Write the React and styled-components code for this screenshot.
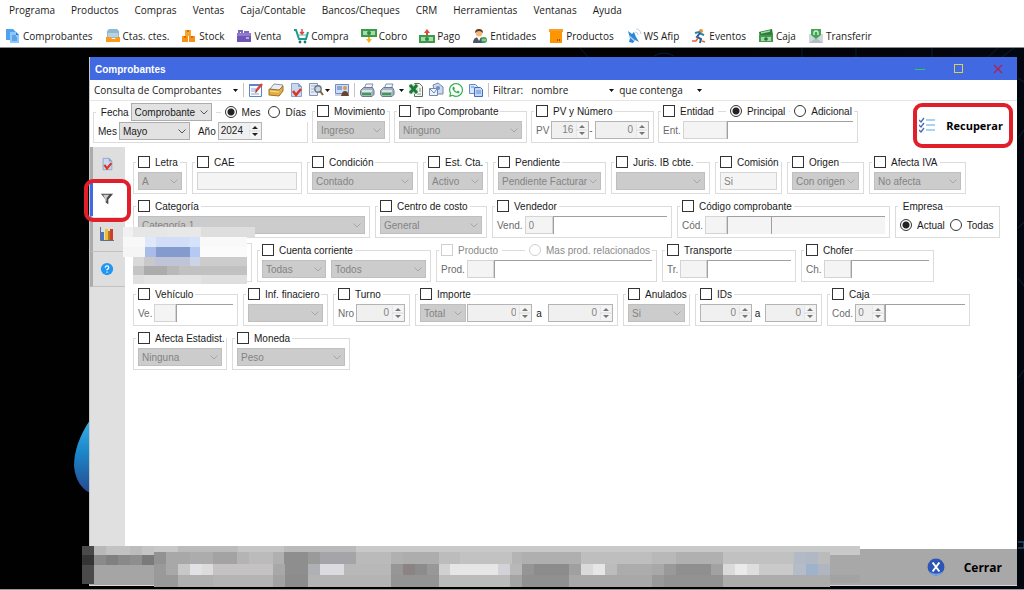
import React from "react";
import styled, { createGlobalStyle } from "styled-components";
import { FaWhatsapp } from "react-icons/fa";

const GlobalStyle = createGlobalStyle`
  * {
    box-sizing: border-box;
  }

  body {
    margin: 0;
    background: #000;
    font-family: "Open Sans", "Noto Sans", sans-serif;
    font-size: 10px;
    color: #1a1a1a;
  }

  button, input, select {
    font: inherit;
    color: inherit;
    margin: 0;
  }
`;

const formFont = `"Liberation Sans", Arial, sans-serif`;

const Page = styled.div`
  min-height: 100vh;
  display: flex;
  flex-direction: column;
  border-bottom: 1px solid #9a9a9a;
`;

const Header = styled.header`
  background: #fff;
  border-bottom: 1px solid #8f8f8f;
`;

const MenuBar = styled.nav`
  display: flex;
  gap: 16px;
  height: 22px;
  align-items: center;
  padding: 0 9px 2px;
`;

const MenuLink = styled.a`
  color: inherit;
  text-decoration: none;
`;

const QuickBar = styled.div`
  display: flex;
  gap: 12px;
  height: 25px;
  align-items: center;
  padding: 2px 5px 0;
`;

const QuickButton = styled.button`
  display: flex;
  align-items: center;
  gap: 2px;
  padding: 0;
  border: 0;
  background: none;
  white-space: nowrap;
`;

const Desktop = styled.main`
  position: relative;
  flex: 1;
  display: flex;
  padding: 9px 7px 3px 89px;
  background: linear-gradient(90deg, #010101 0 60%, #02060f);
`;

const Wallpaper = styled.svg`
  position: absolute;
  top: 0;
  ${(p) => (p.$right ? "right: 0;" : "left: 0;")}
`;

const Window = styled.section`
  position: relative;
  flex: 1;
  min-width: 0;
  display: flex;
  flex-direction: column;
  background: #fff;
  border-left: 1px solid #c8c8c8;
`;

const TitleBar = styled.div`
  display: flex;
  align-items: center;
  height: 23px;
  padding: 1px 13px 0 5px;
  background: #4169e1;
  color: #fff;
`;

const Title = styled.h1`
  flex: 1;
  margin: 0;
  font: bold 10px ${formFont};
`;

const WindowButtons = styled.div`
  display: flex;
  gap: 27px;
`;

const IconButton = styled.button`
  display: flex;
  align-items: center;
  gap: 1px;
  padding: 0;
  border: 0;
  background: none;
`;

const Toolbar = styled.div`
  display: flex;
  align-items: center;
  height: 21px;
  padding-left: 4px;
  border-bottom: 1px solid #e6e6e6;
`;

const Icons = styled.div`
  display: flex;
  align-items: center;
  gap: 4px;
  padding: 0 4px;
`;

const Separator = styled.span`
  width: 1px;
  height: 14px;
  background: #c4c4c4;
`;

const FlatSelect = styled.span`
  position: relative;
  display: flex;
  align-items: center;
  width: ${(p) => p.$w}px;

  select {
    width: 100%;
    height: 17px;
    padding: 0;
    border: 0;
    background: #fff;
    appearance: none;
  }

  svg {
    position: absolute;
    right: 5px;
    pointer-events: none;
  }
`;

const FilterLabel = styled.label`
  padding: 0 8px 0 4px;
`;

const TopRow = styled.div`
  display: flex;
  align-items: flex-end;
  gap: 4px;
  padding: 1px 4px 4px 3px;
  font: 10px ${formFont};
`;

const Body = styled.div`
  flex: 1;
  display: flex;
`;

const Rail = styled.div`
  width: 35px;
  background: #e0e0e0;
`;

const Tab = styled.button`
  position: relative;
  display: flex;
  align-items: center;
  justify-content: center;
  width: 100%;
  height: 35px;
  padding: 0 5px 0 0;
  border: 0;
  border-left: 3px solid ${(p) => (p.$active ? "#4169e1" : "#ababab")};
  border-bottom: 1px solid ${(p) => (p.$active ? "#fff" : "#c2c2c2")};
  background: ${(p) => (p.$active ? "#fff" : "#dedede")};
`;

const Mark = styled.span`
  position: absolute;
  z-index: 2;
  inset: ${(p) => p.$inset};
  border: 4px solid #e01f2b;
  border-radius: 9px;
  pointer-events: none;
`;

const Filters = styled.div`
  position: relative;
  flex: 1;
  display: flex;
  flex-direction: column;
  gap: 5px;
  padding: 8px 8px 20px;
  font: 10px ${formFont};
`;

const Row = styled.div`
  display: flex;
  gap: 5px;
`;

const GroupBox = styled.fieldset`
  flex: none;
  width: ${(p) => p.$w}px;
  min-width: 0;
  height: ${(p) => (p.$tall ? 41 : 39)}px;
  margin: 0;
  padding: ${(p) => (p.$tall ? 0 : 3)}px 4px 3px;
  border: 1px solid #dcdcdc;
`;

const Legend = styled.legend`
  display: flex;
  align-items: center;
  height: ${(p) => (p.$tall ? 20 : 14)}px;
  margin-left: -2px;
  padding: 0 2px;
  white-space: nowrap;
`;

const Rule = styled.span`
  width: ${(p) => p.$w}px;
  height: 1px;
  margin: 0 4px;
  background: #dcdcdc;
`;

const Fields = styled.div`
  display: flex;
  align-items: center;
  gap: ${(p) => p.$gap || 0}px;
  height: 18px;
`;

const Caption = styled.label`
  flex: none;
  padding-right: 2px;
  color: ${(p) => (p.$dark ? "#1a1a1a" : "#6b6b6b")};
`;

const Choice = styled.label`
  display: flex;
  align-items: center;
  gap: 5px;
  color: ${(p) => (p.$off ? "#8a8a8a" : "inherit")};

  input {
    flex: none;
    width: 12px;
    height: 12px;
    border: 1px solid ${(p) => (p.$off ? "#cfcfcf" : "#333")};
    background: #fff;
    appearance: none;
  }

  input[type="radio"] {
    border-radius: 50%;
  }

  input[type="radio"]:checked {
    background: radial-gradient(#222 0 3px, #fff 4px);
  }
`;

const SelectBox = styled.span`
  position: relative;
  flex: ${(p) => (p.$w ? "none" : 1)};
  width: ${(p) => (p.$w ? p.$w + "px" : "auto")};
  min-width: 0;
  display: flex;
  align-items: center;

  select {
    width: 100%;
    height: 18px;
    padding: 0 0 0 3px;
    border: 1px solid ${(p) => (p.$on ? "#adadad" : "#bfbfbf")};
    border-radius: 0;
    background: ${(p) => (p.$on ? "#e2e2e2" : "#cccccc")};
    color: ${(p) => (p.$on ? "#1a1a1a" : "#838383")};
    opacity: 1;
    appearance: none;
  }

  svg {
    position: absolute;
    right: 4px;
    pointer-events: none;
  }
`;

const SpinBox = styled.span`
  position: relative;
  flex: ${(p) => (p.$w ? "none" : 1)};
  width: ${(p) => (p.$w ? p.$w + "px" : "auto")};
  min-width: 0;
  display: flex;
  align-items: center;

  input {
    width: 100%;
    height: 18px;
    padding: 0 ${(p) => (p.$left ? 0 : 15)}px 2px ${(p) => (p.$left ? 2 : 0)}px;
    border: 1px solid #b4b4b4;
    background: #f0f0f0;
    color: ${(p) => (p.$on ? "#1a1a1a" : "#838383")};
    text-align: ${(p) => (p.$left ? "left" : "right")};
    appearance: textfield;
  }

  input::-webkit-inner-spin-button {
    display: none;
  }

  svg {
    position: absolute;
    right: 2px;
    pointer-events: none;
  }
`;

const TextField = styled.input`
  flex: ${(p) => (p.$w ? "none" : 1)};
  width: ${(p) => (p.$w ? p.$w + "px" : "auto")};
  min-width: 0;
  height: 18px;
  padding: 0 3px;
  border: 1px solid #d4d4d4;
  background: #f4f4f4;
  color: #838383;
`;

const LineField = styled(TextField)`
  border: 0;
  border-top: 1px solid #a0a0a0;
  border-left: 1px solid #a0a0a0;
  background: ${(p) => (p.$filled ? "#f4f4f4" : "#fff")};
`;

const Recover = styled.button`
  position: relative;
  display: flex;
  align-items: center;
  gap: 11px;
  height: 36px;
  margin-left: auto;
  padding: 0 10px 0 6px;
  border: 0;
  background: none;
  font: bold 11px "Open Sans", sans-serif;
  color: #000;
`;

const Footer = styled.footer`
  position: relative;
  display: flex;
  align-items: center;
  justify-content: flex-end;
  height: 37px;
  padding-right: 15px;
  background: #a8a8a8;
  border-bottom: 1px solid #d8d8d8;
`;

const CloseButton = styled(IconButton)`
  gap: 19px;
  font: bold 12px "Open Sans", sans-serif;
  color: #000;
`;

const Mosaic = styled.svg`
  position: absolute;
  z-index: 1;
  left: ${(p) => p.$x}px;
  top: ${(p) => p.$y}px;
`;

const Svg = ({ size = 16, children }) => (
  <svg width={size} height={size} viewBox="0 0 16 16" fill="none" aria-hidden="true">
    {children}
  </svg>
);

const quickIcons = {
  docs: (
    <>
      <path d="M1 1h7l3 3v8H1z" fill="#4fa3ee" />
      <path d="M5 4h6l3 3v8H5z" fill="#8cc8fa" />
      <path d="M11 4l3 3h-3z" fill="#2c7fd6" />
      <path d="M7 8h4M7 10h5M7 12h5" stroke="#2c7fd6" />
    </>
  ),
  tray: (
    <>
      <path d="M4 1h8l2 2v7H2V3z" fill="#8fb9d3" />
      <path d="M3 5h10v4H3z" fill="#b7d3e2" />
      <path d="M1 9h5l1 2h3l1-2h4v5H1z" fill="#fb9a1c" />
    </>
  ),
  stock: (
    <>
      <path d="M4 2h6v6H4z" fill="#f8a52b" />
      <path d="M1 8h6v6H1zM8 8h6v6H8z" fill="#f7931a" />
      <path d="M6 2h2v2H6zM3 8h2v2H3zM10 8h2v2h-2z" fill="#d56f05" />
    </>
  ),
  bag: (
    <>
      <path d="M1 5h14v9H1z" fill="#6f55b5" />
      <path d="M1 5h14v3H1z" fill="#9079cf" />
      <path d="M3 5V3h3v2M9 5V4h3v1" stroke="#7d68bd" strokeWidth="2" />
      <path d="M10 9h3v2h-3z" fill="#b9a8e6" />
    </>
  ),
  cart: (
    <>
      <path d="M1 2h2l3 9h7l2-7" stroke="#1d9a8a" strokeWidth="2" />
      <path d="M5 7h9" stroke="#3bb8a5" />
      <path d="M9 1v4M7 4l2 2 2-2" stroke="#e23f3f" strokeWidth="1.4" />
      <circle cx="7" cy="14" r="1.4" fill="#147a6e" />
      <circle cx="12" cy="14" r="1.4" fill="#147a6e" />
    </>
  ),
  cashIn: (
    <>
      <path d="M0 1h16v8H0z" fill="#3a9c4b" />
      <path d="M2 3h12v4H2z" fill="#a5dba8" />
      <circle cx="8" cy="5" r="2" fill="#2f8a41" />
      <path d="M8 9v3" stroke="#f3b51b" strokeWidth="2" />
      <path d="M5 11h6l-3 4z" fill="#f3b51b" />
    </>
  ),
  cashOut: (
    <>
      <path d="M0 7h16v8H0z" fill="#3a9c4b" />
      <path d="M2 9h12v4H2z" fill="#a5dba8" />
      <circle cx="8" cy="11" r="2" fill="#2f8a41" />
      <path d="M8 7V4" stroke="#e5463b" strokeWidth="2" />
      <path d="M5 5h6L8 1z" fill="#e5463b" />
    </>
  ),
  person: (
    <>
      <circle cx="7" cy="5" r="3.4" fill="#f2b879" />
      <path d="M3 5q0-4 4-4t4 4q-2-2-4-2T3 5z" fill="#5b3a1e" />
      <path d="M1 15q0-6 6-6t6 6z" fill="#4b5563" />
      <path d="M5 9l2 4 2-4z" fill="#fff" />
      <circle cx="12" cy="12" r="3" fill="#46a356" />
      <path d="M10 12h4" stroke="#d5f0d4" />
    </>
  ),
  box: (
    <>
      <path d="M1 1h14v3H1z" fill="#f7a029" />
      <path d="M2 3h12v12H2z" fill="#fd9503" />
      <path d="M9 11h1v2H9zM11 11h1v2h-1z" fill="#9a5300" />
    </>
  ),
  dish: (
    <>
      <path d="M2 3l4 3 2-2 2 5 3 5-4-2-2 3-4-1 1-4z" fill="#2f86d6" />
      <path d="M3 8l6 5" stroke="#a8d4f5" strokeWidth="1.6" />
      <path d="M9 4q3 0 3 3M10 1q4 0 5 5" stroke="#b5d3ee" />
    </>
  ),
  runner: (
    <>
      <circle cx="10" cy="3" r="2" fill="#ef8f32" />
      <path d="M4 5l4-1 2 2 3 1" stroke="#2583a5" strokeWidth="2" />
      <path d="M9 5l-3 4 4 2-1 4" stroke="#2a5c9a" strokeWidth="2" />
      <path d="M7 10l-2 3H1M11 13l3 1" stroke="#e06a35" strokeWidth="1.6" />
    </>
  ),
  bills: (
    <>
      <path d="M1 4l13-3 1 6-13 4z" fill="#2e7d3b" />
      <path d="M1 7h14v7H1z" fill="#3f9a4e" />
      <path d="M3 9h10v4H3z" fill="#a3d9a2" />
      <circle cx="8" cy="11" r="1.8" fill="#256a32" />
      <path d="M3 5l9-2" stroke="#a3d9a2" strokeWidth="1.4" />
    </>
  ),
  transfer: (
    <>
      <path d="M1 6h14v9H1z" fill="#cfd8dc" />
      <path d="M1 15l7-5 7 5z" fill="#b0bec5" />
      <path d="M3 1h10v6l-5 4-5-4z" fill="#43a452" />
      <path d="M6 7V5q0-2 2-2t2 2v2" stroke="#d5efd5" strokeWidth="1.4" />
    </>
  ),
};

const quick = [
  ["docs", "Comprobantes"],
  ["tray", "Ctas. ctes."],
  ["stock", "Stock"],
  ["bag", "Venta"],
  ["cart", "Compra"],
  ["cashIn", "Cobro"],
  ["cashOut", "Pago"],
  ["person", "Entidades"],
  ["box", "Productos"],
  ["dish", "WS Afip"],
  ["runner", "Eventos"],
  ["bills", "Caja"],
  ["transfer", "Transferir"],
];

const menus = [
  "Programa",
  "Productos",
  "Compras",
  "Ventas",
  "Caja/Contable",
  "Bancos/Cheques",
  "CRM",
  "Herramientas",
  "Ventanas",
  "Ayuda",
];

const Note = () => (
  <Svg>
    <path d="M1.500 2.500h12v12h-12z" fill="#f7faff" stroke="#5c85c7" />
    <path d="M1 2h13v2H1z" fill="#5c85c7" />
    <path d="M3 7h5M3 9h4M3 12h8" stroke="#8fa9d4" />
    <path d="M14 2l-6 7" stroke="#e0432f" strokeWidth="2.500" />
    <path d="M8 8l-1 3 2-1z" fill="#5b2b1c" />
  </Svg>
);

const Folder = () => (
  <Svg>
    <path d="M2 7l4-5 9 1-3 6z" fill="#e9eef5" stroke="#8a94a5" />
    <path d="M1 7l10 1 4-4v5l-4 5-10-1z" fill="#e3ad43" stroke="#9a7427" />
    <path d="M2 9l9 1" stroke="#fbe09a" />
  </Svg>
);

const DocCheck = ({ size }) => (
  <Svg size={size}>
    <path d="M3.500 1.500h7l3 3v10h-10z" fill="#c9d8ef" stroke="#8ba3cc" />
    <path d="M10 1l4 4h-4z" fill="#89a4d0" />
    <path d="M5 9l3 4 5-6" stroke="#dd3527" strokeWidth="2.600" />
  </Svg>
);

const Find = () => (
  <Svg>
    <path d="M1.500 1.500h8v12h-8z" fill="#e5ebf5" stroke="#8496b5" />
    <path d="M3 4h5M3 7h3M3 10h3" stroke="#a5b3cb" />
    <circle cx="10" cy="7" r="3.200" fill="#c6d6e6" stroke="#6d7884" strokeWidth="1.400" />
    <path d="M12 9l3 4" stroke="#83603c" strokeWidth="2" />
  </Svg>
);

const Card = () => (
  <Svg>
    <path d="M1.500 2.500h13v9h-13z" fill="#cfdcf5" stroke="#6f8cc6" />
    <path d="M3 5h5M3 7h5" stroke="#4c6dae" />
    <circle cx="11" cy="6" r="2" fill="#d7975a" />
    <path d="M7 14q1-5 4-5t4 5z" fill="#66452f" />
    <path d="M1 13h6" stroke="#94a7cc" />
  </Svg>
);

const Printer = () => (
  <Svg>
    <path d="M5 7l2-5h7l-2 5z" fill="#f3f7fd" stroke="#7f92b0" />
    <path d="M1.500 8.500l3-3h9l1.500 3v4l-2 2h-10l-1.500-2z" fill="#a5b2c2" stroke="#6b7a90" />
    <path d="M3 9h10" stroke="#eef3f8" strokeWidth="1.500" />
    <path d="M3 12h9" stroke="#32a447" strokeWidth="2" />
  </Svg>
);

const Excel = () => (
  <Svg>
    <path d="M6.500 1.500h5l3 3v10h-8z" fill="#f3f6f2" stroke="#59705b" />
    <path d="M11 7h2M11 9h2M9 12h4" stroke="#81987f" />
    <path d="M1 2h9v10H1z" fill="#cde6d0" />
    <path d="M2 3l7 8M9 3l-7 8" stroke="#1c7a38" strokeWidth="3" />
  </Svg>
);

const Mail = () => (
  <Svg>
    <path d="M5 3l5-2 5 4v7H7z" fill="#ccd9ee" stroke="#7588ab" />
    <path d="M1.500 6.500h8v7h-8z" fill="#edf2fa" stroke="#7588ab" />
    <path d="M2 7l4 4 3-4" stroke="#7588ab" />
    <circle cx="10" cy="6" r="2" fill="#6c8fc5" />
  </Svg>
);

const Copy = () => (
  <Svg>
    <path d="M1.500 2.500h6l2 2v7h-8z" fill="#dce8fa" stroke="#5e8ad0" />
    <path d="M6.500 5.500h6l2 2v7h-8z" fill="#c3d8f7" stroke="#3d6fc0" />
    <path d="M8 9h5M8 11h5M3 5h3" stroke="#5e8ad0" />
  </Svg>
);

const Funnel = () => (
  <Svg size={14}>
    <path d="M1 2h14L9.500 8.500V14l-3-2V8.500z" fill="#4a4a4a" />
    <path d="M3.500 3h7L7.500 7v4" fill="#cdcdcd" />
  </Svg>
);

const Chart = () => (
  <Svg>
    <path d="M1.500 1v13.500H15" stroke="#5f7088" />
    <path d="M2 6h3v8H2z" fill="#4b74c4" />
    <path d="M6 3h3v11H6z" fill="#f3be35" />
    <path d="M9 5h2v9H9z" fill="#b57b1c" />
    <path d="M11 3h3v11h-3z" fill="#cd3c2d" />
  </Svg>
);

const Help = () => (
  <Svg size={14}>
    <circle cx="8" cy="8" r="7" fill="#2196f3" />
    <path d="M6 6.500q0-2 2-2t2 2q0 1-2 2.200v.8M8 10.800v1.500" stroke="#fff" strokeWidth="1.400" />
  </Svg>
);

const Checklist = () => (
  <Svg>
    <path d="M0 3l2 2 3-4M0 8l2 2 3-4M0 13l2 2 3-4" stroke="#4a68b8" strokeWidth="1.300" />
    <path d="M7 3h9M7 8h9M7 13h9" stroke="#8cc6ea" strokeWidth="1.500" />
  </Svg>
);

const CloseIcon = () => (
  <Svg size={18}>
    <circle cx="8" cy="8" r="7.500" fill="#2d55b5" />
    <path d="M2 12q6 4 12 0-2 3.500-6 3.500T2 12z" fill="#6fa5ef" />
    <path d="M5 4l6 8M11 4l-6 8" stroke="#fff" strokeWidth="1.800" />
  </Svg>
);

const Caret = () => (
  <svg width="5" height="3" viewBox="0 0 5 3" aria-hidden="true">
    <path d="M0 0h5L2.500 3z" fill="#111" />
  </svg>
);

const Chevron = ({ on }) => (
  <svg width="8" height="5" viewBox="0 0 8 5" fill="none" aria-hidden="true">
    <path d="M.5.500L4 4 7.500.500" stroke={on ? "#555" : "#a6a6a6"} />
  </svg>
);

const Arrows = ({ on }) => (
  <svg width="11" height="14" viewBox="0 0 11 14" aria-hidden="true">
    <path d="M0 0h11v14H0z" fill="#f4f4f4" />
    <path d="M0 0v14M0 7h11" stroke="#dadada" />
    <path d="M3 5h6L6 2zM3 9h6l-3 3z" fill={on ? "#222" : "#777"} />
  </svg>
);

const Select = ({ label, value = "", w, on, id }) => (
  <SelectBox $w={w} $on={on}>
    <select id={id} aria-label={label} defaultValue={value} disabled={!on}>
      <option>{value}</option>
    </select>
    <Chevron on={on} />
  </SelectBox>
);

const Spin = ({ label, value = 0, w, on, left, id }) => (
  <SpinBox $w={w} $on={on} $left={left}>
    <input id={id} type="number" aria-label={label} defaultValue={value} disabled={!on} />
    <Arrows on={on} />
  </SpinBox>
);

const Check = ({ label, off }) => (
  <Choice $off={off}>
    <input type="checkbox" disabled={off} />
    {label}
  </Choice>
);

const Radio = ({ name, label, checked, off }) => (
  <Choice $off={off}>
    <input type="radio" name={name} defaultChecked={checked} disabled={off} />
    {label}
  </Choice>
);

const Group = ({ label, w, gap, extra, off, children }) => (
  <GroupBox $w={w}>
    <Legend>
      <Check label={label} off={off} />
      {extra}
    </Legend>
    <Fields $gap={gap}>{children}</Fields>
  </GroupBox>
);

// Short code followed by the description it resolves to
const Lookup = ({ id, caption, w, value = "" }) => (
  <>
    <Caption htmlFor={id}>{caption}</Caption>
    <TextField id={id} $w={w} defaultValue={value} disabled />
    <LineField aria-label={`${caption} descripción`} disabled />
  </>
);

// Each strip: y, height, start x, then [end x, colour] pairs
const footerStrips = [
  [0, 38, 0, [[12, "#4a4a4a"]]],
  [9, 10, 0, [[12, "#343434"], [24, "#8a8a8a"], [36, "#808080"], [48, "#898989"], [60, "#8e8e8e"], [72, "#7a7a7a"]]],
  [0, 9, 12, [[24, "#b8b8b8"], [48, "#c2c2c2"], [60, "#bcbcbc"], [72, "#c4c4c4"]]],
  [19, 20, 12, [[72, "#a5a5a5"]]],
  [0, 6, 72, [[96, "#c8c8c8"], [156, "#bbbbbb"], [202, "#c5c5c5"], [274, "#bababa"], [778, "#c9c9c9"]]],
  [6, 3, 748, [[778, "#c9c9c9"]]],
  [6, 12, 72, [[84, "#929292"], [108, "#a8a8a8"], [131, "#acacac"], [155, "#a3a3a3"], [167, "#b4b4b4"], [191, "#bbbbbb"], [202, "#b0b0b0"], [226, "#8e8e8e"], [238, "#9a9a9a"], [274, "#a5a5a9"], [309, "#bababa"], [321, "#b0b0b0"], [357, "#adadad"], [378, "#bcbcbc"], [430, "#c2c2c2"], [440, "#b4b4b4"], [499, "#afafaf"], [570, "#bebebe"], [594, "#b8b8b8"], [641, "#b0b0b0"], [712, "#c1c1c1"], [724, "#b2bac6"], [736, "#b0b8c4"], [748, "#bbbbbb"]]],
  [18, 11, 72, [[84, "#9a9a9a"], [96, "#a8a8a8"], [108, "#c8c8c8"], [120, "#e2e2e6"], [131, "#dcdcdc"], [191, "#c4c2c2"], [203, "#a8a8a8"], [226, "#8e8e8e"], [238, "#aeb0b6"], [262, "#dcdce0"], [309, "#b8b8b8"], [321, "#969696"], [333, "#8a8484"], [345, "#8c8c8c"], [357, "#989898"], [368, "#d0d0d0"], [416, "#e6e6e6"], [428, "#d2d2d8"], [440, "#b8b8b8"], [452, "#959595"], [487, "#8c8c8c"], [499, "#a0a0a0"], [511, "#dadada"], [523, "#e6e6e6"], [535, "#bcbcbc"], [570, "#acacac"], [582, "#a8a8a8"], [594, "#999999"], [629, "#8f8f8f"], [641, "#a2a2a2"], [653, "#dadada"], [665, "#eaeaea"], [677, "#dedede"], [711, "#cacaca"], [724, "#b4bcc8"], [736, "#9fb2cc"], [748, "#b0b6c0"]]],
  [29, 12, 72, [[96, "#999999"], [131, "#b0b0b0"], [191, "#b4b4b4"], [203, "#a2a2a2"], [226, "#8c8c8c"], [309, "#b4b4b4"], [357, "#949494"], [428, "#bbbbbb"], [440, "#a4a4a4"], [487, "#909090"], [570, "#a8a8a8"], [582, "#999999"], [641, "#929292"], [748, "#acacac"]]],
  [29, 8, 748, [[778, "#a3a3a3"]]],
];

const groupStrips = [
  [0, 10, 0, [[10, "#f1f1f1"], [44, "#e6e6e6"], [78, "#e8e8e8"], [132, "#dedede"]]],
  [10, 10, 0, [[22, "#f8f8f8"], [33, "#dfe7fa"], [66, "#d2def8"], [77, "#d6e2fb"], [124, "#f9f9f9"]]],
  [20, 10, 0, [[22, "#f5f5f5"], [33, "#a9bce8"], [67, "#839bcd"], [77, "#b6c9f2"], [124, "#fbfbfb"]]],
  [30, 9, 10, [[21, "#d9d9d9"], [32, "#c9c9cb"], [67, "#bfc5d6"], [77, "#ccd4e8"], [124, "#cccccc"]]],
  [39, 9, 10, [[21, "#c4c4c4"], [44, "#acacac"], [56, "#b8b8b8"], [124, "#c1c1c1"]]],
  [48, 9, 10, [[21, "#dfdfdf"], [78, "#e3e3e3"], [124, "#dedede"]]],
];

const Strips = ({ data }) =>
  data.map(([y, h, start, cells], row) =>
    cells.map(([end, fill], i) => {
      const x = i ? cells[i - 1][0] : start;
      return <rect key={`${row}-${i}`} x={x} y={y} width={end - x} height={h} fill={fill} />;
    })
  );

function AppHeader() {
  return (
    <Header>
      <MenuBar>
        {menus.map((m) => (
          <MenuLink href="#" key={m}>
            {m}
          </MenuLink>
        ))}
      </MenuBar>
      <QuickBar>
        {quick.map(([icon, label]) => (
          <QuickButton key={label}>
            <Svg>{quickIcons[icon]}</Svg>
            {label}
          </QuickButton>
        ))}
      </QuickBar>
    </Header>
  );
}

function WindowTitle() {
  return (
    <TitleBar>
      <Title>Comprobantes</Title>
      <WindowButtons>
        <IconButton aria-label="Minimizar">
          <svg width="12" height="10" viewBox="0 0 12 10" shapeRendering="crispEdges">
            <path d="M1 5h10v1H1z" fill="#22d060" />
          </svg>
        </IconButton>
        <IconButton aria-label="Maximizar">
          <svg width="12" height="10" viewBox="0 0 12 10" shapeRendering="crispEdges">
            <path d="M1 0h9v9H1zM2 1v7h7V1z" fill="#d9cf5a" fillRule="evenodd" />
          </svg>
        </IconButton>
        <IconButton aria-label="Cerrar ventana">
          <svg width="12" height="10" viewBox="0 0 12 10">
            <path d="M2 1l8 8M10 1L2 9" stroke="#b5204a" strokeWidth="1.300" />
          </svg>
        </IconButton>
      </WindowButtons>
    </TitleBar>
  );
}

function WindowToolbar() {
  return (
    <Toolbar>
      <FlatSelect $w={149}>
        <select aria-label="Consulta" defaultValue="Consulta de Comprobantes">
          <option>Consulta de Comprobantes</option>
        </select>
        <Caret />
      </FlatSelect>
      <Separator />
      <Icons>
        <IconButton aria-label="Editar"><Note /></IconButton>
        <IconButton aria-label="Abrir"><Folder /></IconButton>
        <IconButton aria-label="Validar"><DocCheck /></IconButton>
        <IconButton aria-label="Buscar"><Find /><Caret /></IconButton>
        <IconButton aria-label="Ficha"><Card /></IconButton>
      </Icons>
      <Separator />
      <Icons>
        <IconButton aria-label="Imprimir"><Printer /></IconButton>
        <IconButton aria-label="Imprimir como"><Printer /></IconButton>
        <IconButton aria-label="Opciones"><Caret /></IconButton>
        <IconButton aria-label="Excel"><Excel /></IconButton>
        <IconButton aria-label="Correo"><Mail /></IconButton>
        <IconButton aria-label="WhatsApp"><FaWhatsapp size={16} color="#2bb24a" /></IconButton>
        <IconButton aria-label="Copiar"><Copy /></IconButton>
      </Icons>
      <Separator />
      <FilterLabel htmlFor="filtrar">Filtrar:</FilterLabel>
      <FlatSelect $w={88}>
        <select id="filtrar" defaultValue="nombre">
          <option>nombre</option>
        </select>
        <Caret />
      </FlatSelect>
      <FlatSelect $w={88}>
        <select aria-label="Condición del filtro" defaultValue="que contenga">
          <option>que contenga</option>
        </select>
        <Caret />
      </FlatSelect>
    </Toolbar>
  );
}

function TopFilters() {
  return (
    <TopRow>
      <GroupBox $w={215} $tall>
        <Legend $tall>
          <Caption $dark htmlFor="fecha">&nbsp;Fecha</Caption>
          <Select id="fecha" value="Comprobante" w={81} on />
          <Rule $w={5} />
          <Radio name="periodo" label="Mes" checked />
          <Rule $w={0} />
          <Radio name="periodo" label="Días" />
        </Legend>
        <Fields>
          <Caption $dark htmlFor="mes">Mes</Caption>
          <Select id="mes" value="Mayo" w={71} on />
          <Rule $w={0} />
          <Caption $dark htmlFor="anio">Año</Caption>
          <Spin id="anio" value={2024} w={44} on left />
        </Fields>
      </GroupBox>
      <Group label="Movimiento" w={78}>
        <Select label="Movimiento" value="Ingreso" />
      </Group>
      <Group label="Tipo Comprobante" w={133}>
        <Select label="Tipo Comprobante" value="Ninguno" />
      </Group>
      <Group label="PV y Número" w={123}>
        <Caption htmlFor="pv">PV</Caption>
        <Spin id="pv" value={16} w={38} />
        <Caption htmlFor="numero">-</Caption>
        <Spin id="numero" />
      </Group>
      <Group
        label="Entidad"
        w={200}
        extra={
          <>
            <Rule $w={8} />
            <Radio name="entidad" label="Principal" checked />
            <Rule $w={1} />
            <Radio name="entidad" label="Adicional" />
          </>
        }
      >
        <Lookup id="ent" caption="Ent." w={44} />
      </Group>
      <Recover>
        <Checklist />
        Recuperar
        <Mark $inset="-4px 0 -5px 0" />
      </Recover>
    </TopRow>
  );
}

function FilterPanel() {
  return (
    <Filters>
      <Row>
        <Group label="Letra" w={54}><Select label="Letra" value="A" /></Group>
        <Group label="CAE" w={110}><TextField aria-label="CAE" disabled /></Group>
        <Group label="Condición" w={111}><Select label="Condición" value="Contado" /></Group>
        <Group label="Est. Cta." w={65}><Select label="Estado de cuenta" value="Activo" /></Group>
        <Group label="Pendiente" w={113}><Select label="Pendiente" value="Pendiente Facturar" /></Group>
        <Group label="Juris. IB cbte." w={99}><Select label="Jurisdicción" /></Group>
        <Group label="Comisión" w={67}><TextField aria-label="Comisión" defaultValue="Si" disabled /></Group>
        <Group label="Origen" w={77}><Select label="Origen" value="Con origen" /></Group>
        <Group label="Afecta IVA" w={97}><Select label="Afecta IVA" value="No afecta" /></Group>
      </Row>
      <Row>
        <Group label="Categoría" w={237}><Select label="Categoría" value="Categoría 1" /></Group>
        <Group label="Centro de costo" w={112}><Select label="Centro de costo" value="General" /></Group>
        <Group label="Vendedor" w={180}><Lookup id="vend" caption="Vend." w={28} value="0" /></Group>
        <Group label="Código comprobante" w={213}>
          <Caption htmlFor="cod">Cód.</Caption>
          <TextField id="cod" $w={22} disabled />
          <LineField aria-label="Código" $w={44} $filled disabled />
          <LineField aria-label="Descripción del código" $filled disabled />
        </Group>
        <GroupBox $w={105}>
          <Legend>&nbsp;Empresa</Legend>
          <Fields $gap={5}>
            <Radio name="empresa" label="Actual" checked />
            <Radio name="empresa" label="Todas" />
          </Fields>
        </GroupBox>
      </Row>
      <Row>
        <GroupBox $w={119} aria-hidden="true" />
        <Group label="Cuenta corriente" w={174} gap={5}>
          <Select label="Cuenta corriente" value="Todas" w={64} />
          <Select label="Tipo de cuenta" value="Todos" />
        </Group>
        <Group
          label="Producto"
          w={221}
          off
          extra={
            <>
              <Rule $w={23} />
              <Radio name="relacionados" label="Mas prod. relacionados" off />
            </>
          }
        >
          <Lookup id="prod" caption="Prod." w={27} />
        </Group>
        <Group label="Transporte" w={134}><Lookup id="tr" caption="Tr." w={27} /></Group>
        <Group label="Chofer" w={133}><Lookup id="ch" caption="Ch." w={27} /></Group>
      </Row>
      <Row>
        <Group label="Vehículo" w={105}><Lookup id="ve" caption="Ve." w={22} /></Group>
        <Group label="Inf. finaciero" w={85}><Select label="Inf. finaciero" /></Group>
        <Group label="Turno" w={77}>
          <Caption htmlFor="nro">Nro</Caption>
          <Spin id="nro" />
        </Group>
        <Group label="Importe" w={203} gap={1}>
          <Select label="Importe" value="Total" w={46} />
          <Spin label="Importe desde" />
          <Caption $dark htmlFor="importe-hasta">&nbsp;a&nbsp;</Caption>
          <Spin id="importe-hasta" />
        </Group>
        <Group label="Anulados" w={67}><Select label="Anulados" value="Si" /></Group>
        <Group label="IDs" w={127}>
          <Spin label="ID desde" />
          <Caption $dark htmlFor="id-hasta">&nbsp;a&nbsp;</Caption>
          <Spin id="id-hasta" />
        </Group>
        <Group label="Caja" w={143}>
          <Caption htmlFor="caja">Cod.</Caption>
          <Spin id="caja" w={30} left />
          <LineField aria-label="Caja descripción" disabled />
        </Group>
      </Row>
      <Row>
        <Group label="Afecta Estadist." w={94}><Select label="Afecta Estadist." value="Ninguna" /></Group>
        <Group label="Moneda" w={118}><Select label="Moneda" value="Peso" /></Group>
      </Row>
      <Mosaic $x={-2} $y={80} width="132" height="57" shapeRendering="crispEdges" aria-hidden="true">
        <Strips data={groupStrips} />
      </Mosaic>
    </Filters>
  );
}

function App() {
  return (
    <>
      <GlobalStyle />
      <Page>
        <AppHeader />
        <Desktop>
          <Wallpaper width="90" height="480" aria-hidden="true">
            <defs>
              <linearGradient id="drop" x1="0" y1="0" x2="0" y2="1">
                <stop offset="0" stopColor="#3bb0e6" />
                <stop offset=".45" stopColor="#1a86c8" />
                <stop offset="1" stopColor="#27498f" />
              </linearGradient>
            </defs>
            <path d="M90 372Q74 396 74 418Q76 438 90 445z" fill="url(#drop)" />
          </Wallpaper>
          <Wallpaper $right width="520" height="541" fill="none" stroke="#0e3a5c" aria-hidden="true">
            <path d="M76 0l8 9M298 0v9M352 0v9M428 0v9M484 9l10-9M498 9l12-9M150 8q10-6 20 0" opacity=".5" />
            <path d="M514 30l6 4M514 90l6-8M514 180l6-6M514 230l6 8M514 330l6-8" opacity=".6" />
            <path d="M514 494h6v6h-6" stroke="#2f6ea3" />
          </Wallpaper>
          <Window>
            <WindowTitle />
            <WindowToolbar />
            <TopFilters />
            <Body>
              <Rail>
                <Tab aria-label="Comprobantes"><DocCheck size={14} /></Tab>
                <Tab aria-label="Filtros" $active>
                  <Funnel />
                  <Mark $inset="-3px -6px -6px -9px" />
                </Tab>
                <Tab aria-label="Gráficos"><Chart /></Tab>
                <Tab aria-label="Ayuda"><Help /></Tab>
              </Rail>
              <FilterPanel />
            </Body>
            <Footer>
              <Mosaic $x={-8} $y={-3} width="778" height="41" shapeRendering="crispEdges" aria-hidden="true">
                <Strips data={footerStrips} />
              </Mosaic>
              <CloseButton>
                <CloseIcon />
                Cerrar
              </CloseButton>
            </Footer>
          </Window>
        </Desktop>
      </Page>
    </>
  );
}

export default App;
